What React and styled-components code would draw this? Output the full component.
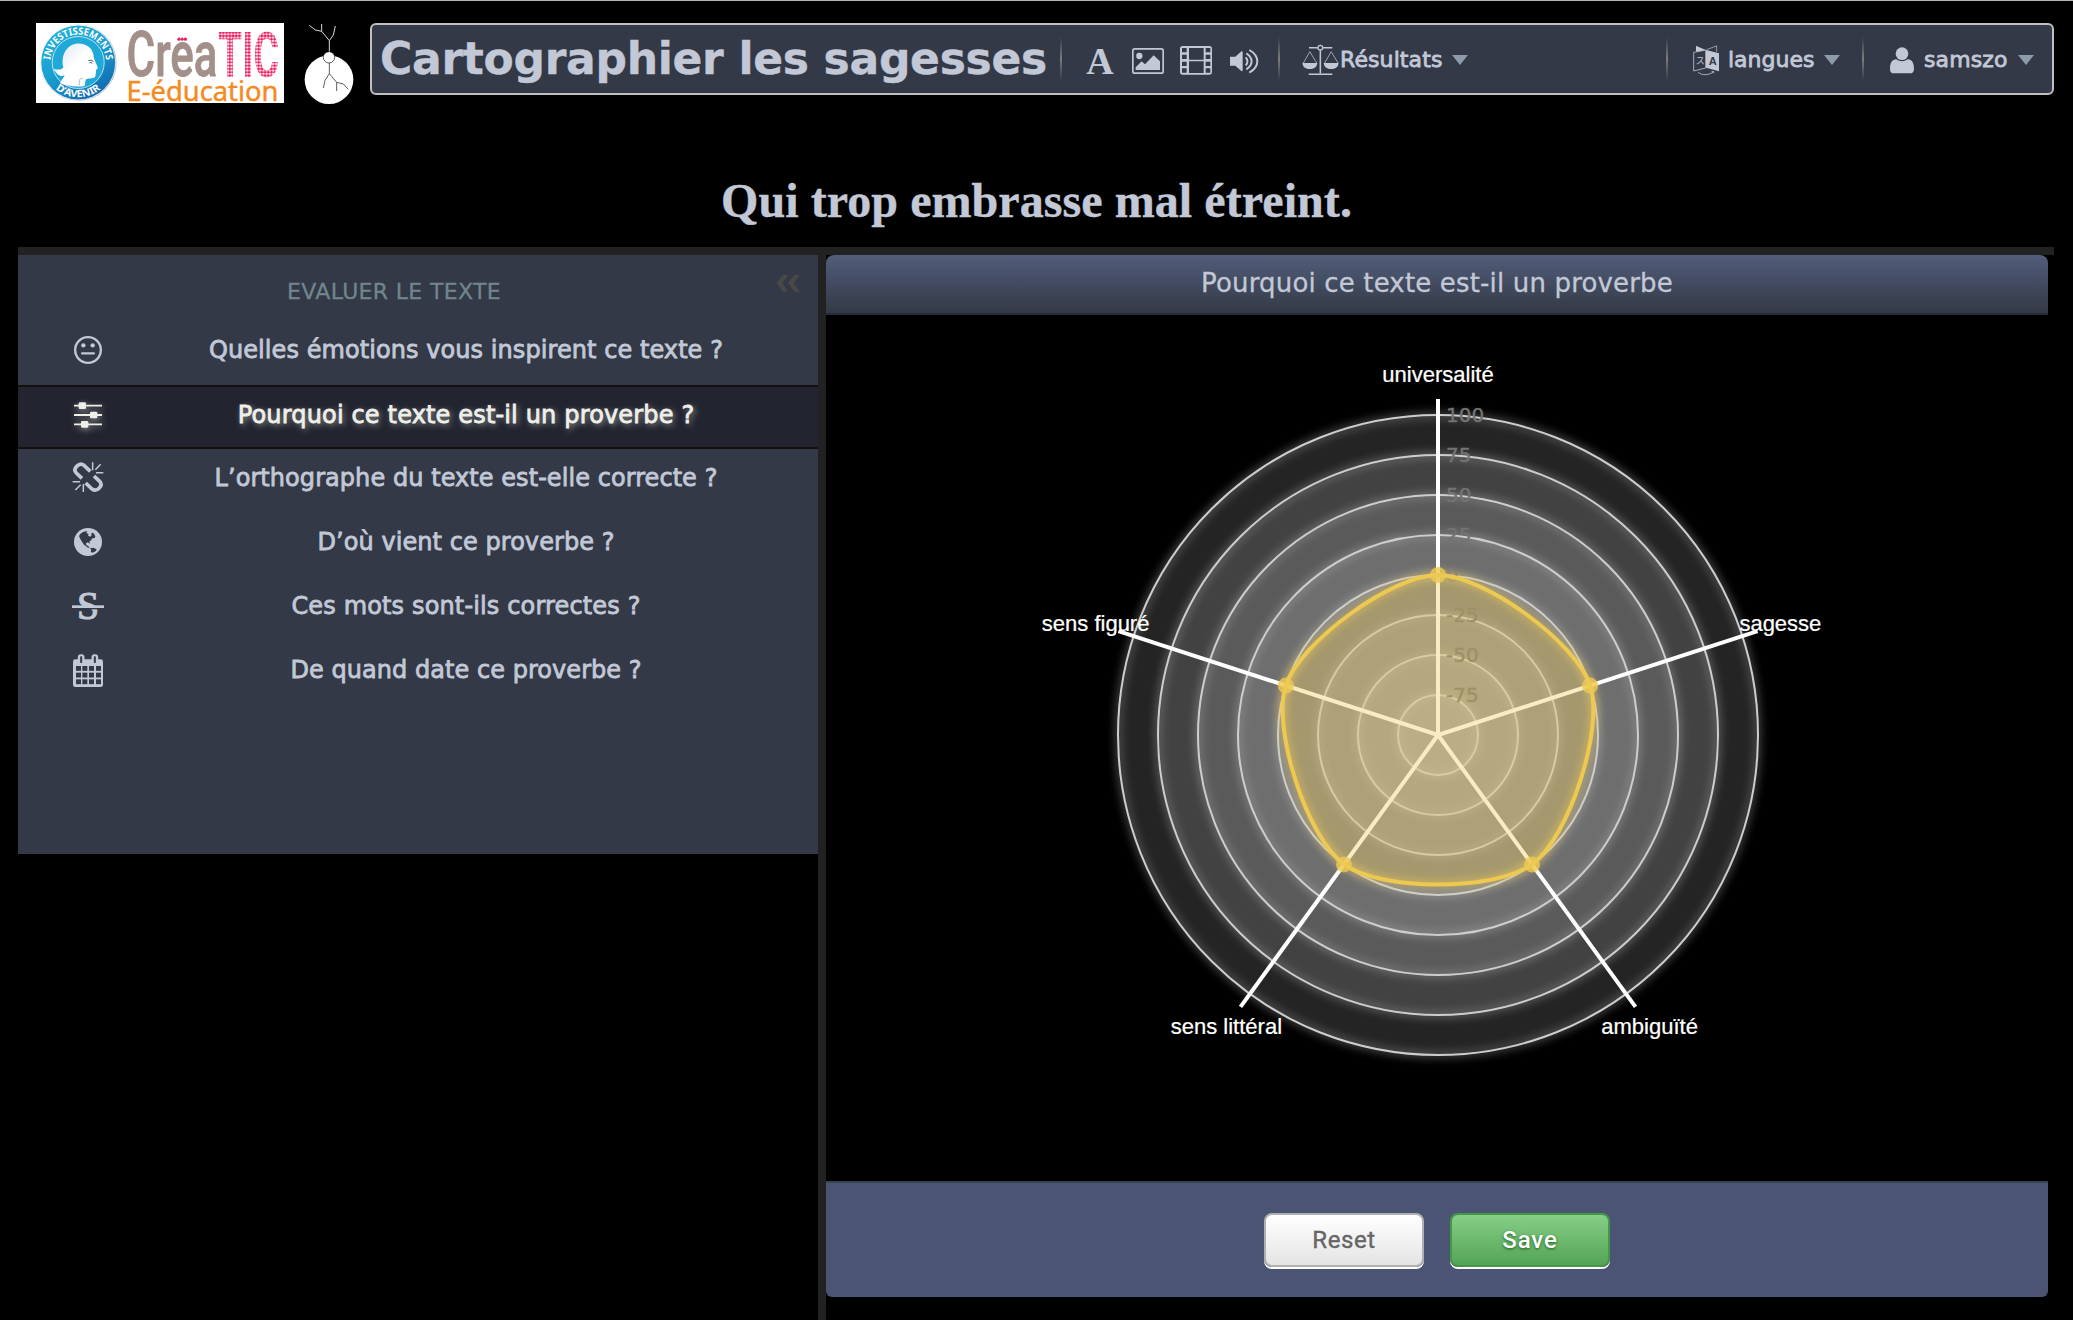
import React from 'react';
import styled, { createGlobalStyle, css } from 'styled-components';

const SANS = '"DejaVu Sans", Verdana, sans-serif';
const INK = '#c2c8d6';
const PANEL = '#333947';

const GlobalStyle = createGlobalStyle`
  * { box-sizing: border-box; }
  html, body { margin: 0; padding: 0; background: #000; }
  body { font-family: ${SANS}; color: ${INK}; overflow: hidden; }
  svg { display: block; flex: none; overflow: visible; }
`;

const Page = styled.div`
  width: 100vw;
  height: 100vh;
  display: flex;
  flex-direction: column;
  background: #000;
  border-top: 1px solid #b1b7b5;
`;

const Header = styled.header`
  display: flex;
  align-items: flex-start;
  padding: 22px 19px 0 36px;
  height: 102px;
`;

const LogoBox = styled.div`
  width: 248px;
  height: 80px;
  background: #fff;
  margin-right: 20px;
`;

const TreeBox = styled.div`
  width: 50px;
  height: 80px;
  margin-right: 16px;
`;

const Toolbar = styled.nav`
  flex: 1;
  height: 72px;
  display: flex;
  align-items: center;
  background: ${PANEL};
  border: 2px solid #c0c0c0;
  border-radius: 6px;
  padding: 0 18px 0 8px;
`;

const AppName = styled.h1`
  margin: 0;
  width: 680px;
  font-size: 44px;
  line-height: 68px;
  height: 68px;
  font-weight: 700;
  letter-spacing: -0.3px;
  white-space: nowrap;
  -webkit-text-stroke: 0.4px ${INK};
`;

const Separator = styled.i`
  width: 2px;
  height: 44px;
  background: linear-gradient(to bottom, rgba(128, 128, 128, 0), #7d7b7b 50%, rgba(128, 128, 128, 0));
`;

const MediaGroup = styled.div`
  display: flex;
  padding: 3px 10px 0 14px;
`;

const MediaButton = styled.span`
  width: 48px;
  height: 44px;
  display: flex;
  align-items: center;
  justify-content: center;
`;

const MenuButton = styled.div`
  display: flex;
  align-items: center;
  padding-top: 2px;
  padding-left: ${(p) => p.$left}px;
  padding-right: ${(p) => p.$right || 0}px;
`;

const MenuLabel = styled.span`
  width: ${(p) => p.$width}px;
  margin-left: ${(p) => p.$gap}px;
  font-size: 22px;
  line-height: 30px;
  letter-spacing: ${(p) => p.$track || 0}px;
  white-space: nowrap;
  -webkit-text-stroke: 0.8px ${INK};
`;

const Caret = styled.i`
  border: 8px solid transparent;
  border-top: 10px solid #8d9aa9;
  border-bottom: 0;
`;

const Spacer = styled.div`
  flex: 1;
`;

const Proverb = styled.h2`
  margin: 0;
  height: 144px;
  padding-top: 70px;
  text-align: center;
  font-family: "Liberation Serif", "Times New Roman", serif;
  font-size: 48px;
  line-height: 56px;
  font-weight: 700;
  letter-spacing: 0.07px;
  -webkit-text-stroke: 0.4px ${INK};
`;

const Workspace = styled.main`
  flex: 1;
  display: flex;
  margin: 0 19px 0 18px;
  border-top: 8px solid #222;
`;

const Side = styled.aside`
  width: 808px;
  border-right: 8px solid #222;
`;

const SidePanel = styled.div`
  height: 599px;
  background: ${PANEL};
`;

const SideHeader = styled.div`
  height: 66px;
  display: flex;
  align-items: flex-start;
`;

const SideTitle = styled.div`
  width: 752px;
  padding-top: 21px;
  text-align: center;
  font-size: 22px;
  line-height: 31px;
  letter-spacing: 0.33px;
  color: #71868c;
  -webkit-text-stroke: 0.3px #71868c;
`;

const Collapse = styled.div`
  padding: 19px 0 0 6px;
`;

const Entry = styled.div`
  height: 64px;
  display: flex;
  align-items: center;
  padding: 0 0 6px 44px;
  color: ${INK};
  ${(p) =>
    p.$active &&
    css`
      color: #efefea;
      background: #222530;
      border-top: 2px solid #111;
      border-bottom: 2px solid #111;
      padding-bottom: 5px;
      text-shadow: 2px 2px 6px rgba(240, 240, 225, 0.65);
      svg { filter: drop-shadow(1px 2px 3px rgba(240, 240, 225, 0.5)); }
    `}
`;

const EntryIcon = styled.span`
  width: 52px;
  display: flex;
  justify-content: center;
`;

const EntryText = styled.span`
  flex: 1;
  text-align: center;
  font-size: 24px;
  line-height: 32px;
  letter-spacing: ${(p) => p.$track || 0}px;
  -webkit-text-stroke: 0.8px currentColor;
`;

const Detail = styled.section`
  flex: 1;
  display: flex;
  flex-direction: column;
  margin-right: 6px;
  padding-bottom: 23px;
`;

const DetailHeader = styled.div`
  height: 60px;
  border-radius: 8px 8px 0 0;
  border-bottom: 2px solid #272c38;
  background: linear-gradient(#515d7a, #333945);
  text-align: center;
  font-size: 26px;
  line-height: 57px;
  letter-spacing: 0.16px;
  -webkit-text-stroke: 0.3px ${INK};
`;

const ChartArea = styled.div`
  flex: 1;
  min-height: 0;
`;

const Footer = styled.div`
  height: 116px;
  display: flex;
  justify-content: center;
  align-items: flex-start;
  gap: 26px;
  padding-top: 30px;
  background: #4b5573;
  border-top: 2px solid #3d4355;
  border-radius: 0 0 6px 6px;
`;

const Button = styled.button`
  width: 160px;
  height: 54px;
  padding: 0 0 1px;
  border-radius: 8px;
  font-family: Roboto, sans-serif;
  font-size: 24px;
  letter-spacing: ${(p) => (p.$primary ? 0.9 : 0.6)}px;
  border: 2px solid ${(p) => (p.$primary ? '#46964a' : '#b0b0b0')};
  color: ${(p) => (p.$primary ? '#fff' : '#666')};
  font-weight: ${(p) => (p.$primary ? 500 : 400)};
  -webkit-text-stroke: ${(p) => (p.$primary ? '0' : '0.4px #666')};
  text-shadow: ${(p) => (p.$primary ? '0 1px 3px rgba(0,60,0,.75)' : 'none')};
  background: ${(p) => (p.$primary ? 'linear-gradient(#85cf86, #54a457)' : 'linear-gradient(#fff, #e4e4e4)')};
  box-shadow: 0 2px 0 #fff;
`;

/* ---------- logos ---------- */

function CreaticLogo() {
  return (
    <svg width="248" height="80" viewBox="36 23 248 80">
      <defs>
        <linearGradient id="badge" x1="0" y1="0" x2="0.6" y2="1">
          <stop offset="0" stopColor="#22b4de" />
          <stop offset="0.55" stopColor="#1b9fd2" />
          <stop offset="1" stopColor="#136eb4" />
        </linearGradient>
        <linearGradient id="face" x1="0" y1="0" x2="1" y2="1">
          <stop offset="0" stopColor="#d9e4ee" />
          <stop offset="0.5" stopColor="#fff" />
        </linearGradient>
        <pattern id="dots" x="218.6" y="31" width="3.2" height="3.3" patternUnits="userSpaceOnUse">
          <circle cx="1.6" cy="1.65" r="1.5" fill="#ea1c5c" />
        </pattern>
        <path id="arcTop" d="M50.2,62.5 A28,28 0 0 1 106.2,62.5" />
        <path id="arcBottom" d="M43.4,62.5 A34.8,34.8 0 0 0 113,62.5" />
      </defs>
      <circle cx="78.6" cy="62.8" r="38.2" fill="#cdd3d8" />
      <circle cx="78" cy="62.3" r="37.6" fill="#fff" />
      <circle cx="78.2" cy="62.5" r="37" fill="url(#badge)" />
      <circle cx="78.2" cy="62.5" r="26" fill="#1fa9d8" stroke="#dff2fa" strokeWidth="0.8" />
      <g transform="translate(0 0) scale(0.33333)">
        <path
          d="M180,250 C186,238 192,232 194,226 C182,232 170,224 161,206 C172,210 182,210 190,203 C183,176 192,148 214,136 C238,124 266,134 276,152 C282,162 280,170 283,178 L293,202 C294,208 288,208 288,211 L288,218 C286,221 288,225 285,231 C278,238 262,232 257,240 L254,258 C228,262 198,258 180,250 Z"
          fill="url(#face)"
        />
        <path d="M265,182 Q273,178 280,184 M268,189 Q273,185 277,190" stroke="#53606c" strokeWidth="3" fill="none" />
        <path d="M248,236 C240,232 236,240 238,256" stroke="#a9b8c6" strokeWidth="3" fill="none" />
      </g>
      <text fontFamily="Noto Sans, sans-serif" fontWeight="700" fontSize="10" fill="#fff">
        <textPath href="#arcTop" startOffset="2.5" textLength="83" lengthAdjust="spacingAndGlyphs">INVESTISSEMENTS</textPath>
      </text>
      <text fontFamily="Noto Sans, sans-serif" fontWeight="700" fontSize="10" fill="#fff">
        <textPath href="#arcBottom" startOffset="30" textLength="49" lengthAdjust="spacingAndGlyphs">D’AVENIR</textPath>
      </text>
      <text x="126.5" y="76" fontFamily="Roboto, sans-serif" fontWeight="500" fontSize="63" fill="#a3908a" stroke="#a3908a" strokeWidth="0.8" textLength="91" lengthAdjust="spacingAndGlyphs">Crea</text>
      <circle cx="179" cy="39.2" r="1.6" fill="#ea1c5c" />
      <circle cx="182.2" cy="39.2" r="1.6" fill="#ea1c5c" />
      <circle cx="185.4" cy="39.2" r="1.6" fill="#ea1c5c" />
      <text x="218" y="76.5" fontFamily="Roboto, sans-serif" fontWeight="700" fontSize="63" fill="url(#dots)" textLength="61" lengthAdjust="spacingAndGlyphs">TIC</text>
      <text x="126.5" y="100.5" fontFamily="Comic Sans MS, Noto Sans, sans-serif" fontSize="27" fill="#f58a1f" stroke="#f58a1f" strokeWidth="0.4" textLength="152" lengthAdjust="spacingAndGlyphs">E-éducation</text>
    </svg>
  );
}

function TreeLogo() {
  return (
    <svg width="50" height="80" viewBox="912 69 150 240" fill="none">
      <circle cx="987" cy="239" r="73" fill="#fff" />
      <g stroke="#d8d8d8" strokeWidth="3">
        <path d="M988,156 V122 L965,94 L946,90 L928,76 M965,94 V72 M988,122 L1000,105 L1006,78" />
      </g>
      <g stroke="#333" strokeWidth="2.4">
        <path d="M988,188 V221 L975,241 L970,264 M988,221 L1010,247 L1030,252 L1045,268 M1010,247 V273" />
      </g>
      <circle cx="987" cy="172" r="17" fill="#fff" stroke="#111" strokeWidth="2" />
    </svg>
  );
}

/* ---------- toolbar icons ---------- */

const LetterIcon = () => (
  <svg width="32" height="32" viewBox="0 0 32 32">
    <text x="16" y="28.5" textAnchor="middle" fontFamily="Liberation Serif, serif" fontWeight="700" fontSize="38" fill={INK}>A</text>
  </svg>
);

const ImageIcon = () => (
  <svg width="32" height="26" viewBox="276 141 96 78">
    <rect x="278.5" y="143.5" width="91" height="73" rx="6" fill="none" stroke={INK} strokeWidth="5" />
    <circle cx="298" cy="165" r="9.5" fill={INK} />
    <path d="M287,207 V199 L305,181 L315,190 L341,163 L360,181 V207 Z" fill={INK} />
  </svg>
);

const FilmIcon = () => {
  const hole = (x, y, w, h) => `M${x},${y} h${w} v${h} h${-w} Z `;
  const ys = [147, 167, 188, 208];
  const holes =
    hole(447, 147, 44, 35) + hole(447, 187, 44, 35) +
    ys.map((y) => hole(426, y, 14, 13) + hole(497, y, 14, 13)).join('');
  return (
    <svg width="32" height="29" viewBox="420 141 96 87">
      <path
        fill={INK}
        fillRule="evenodd"
        d={`M428,141 H508 Q516,141 516,149 V219 Q516,227 508,227 H428 Q420,227 420,219 V149 Q420,141 428,141 Z ${holes}`}
      />
    </svg>
  );
};

const VolumeIcon = () => (
  <svg width="32" height="26" viewBox="564 141 96 78">
    <path d="M570,167 H586 L604,151 Q608,149 608,154 V207 Q608,212 604,210 L586,194 H570 Z" fill={INK} />
    <path d="M617,169 Q628,181 617,193 M619,157 C640,170 640,192 619,205 M628,147 C660,165 660,197 628,215" fill="none" stroke={INK} strokeWidth="6" />
  </svg>
);

const BalanceIcon = () => (
  <svg width="37" height="32" viewBox="785 134 111 96">
    <g fill="none" stroke={INK} strokeWidth="4.5">
      <path d="M806,145 H832 M848,145 H876 M840,153 V222 M805,224.5 H876" />
      <circle cx="840" cy="145" r="7" strokeWidth="4" />
      <path d="M789,191 L808.500,157 L829,191 M853,191 L872.500,157 L893,191" strokeWidth="2.2" />
    </g>
    <path d="M786,191 H831 C829,205 820,209 808.500,209 S788,205 786,191 Z M850,191 H895 C893,205 884,209 872.500,209 S852,205 850,191 Z" fill={INK} />
  </svg>
);

const TranslateIcon = () => (
  <svg width="27" height="31" viewBox="279 135 81 93">
    <path d="M288,137 L317,150 L288,155 Z" fill={INK} />
    <path d="M320,149 L350,137.500 V156" fill="none" stroke={INK} strokeWidth="2" />
    <path d="M281,157 L317,150.500 V204 L281,213 Z" fill="none" stroke={INK} strokeWidth="2.4" />
    <path d="M318,150 L357,160 V214 L318,203 Z" fill={INK} />
    <path d="M294,217 C306,227 328,226 341,215 M335,215 L341,214.500 L341,220" fill="none" stroke={INK} strokeWidth="2.4" />
    <text x="287" y="193" fontFamily="Noto Sans CJK JP, sans-serif" fontSize="27" fill={INK}>ス</text>
    <text x="326" y="196" fontFamily="Liberation Sans, sans-serif" fontWeight="700" fontSize="35" textLength="24" lengthAdjust="spacingAndGlyphs" fill={PANEL}>A</text>
  </svg>
);

const UserIcon = () => (
  <svg width="24" height="27" viewBox="870 140 72 81">
    <circle cx="906" cy="160" r="19" fill={INK} />
    <path d="M870,205 C870,188 876,177 889,177 C899,185 913,185 923,177 C936,177 942,188 942,205 C942,215 938,219 930,219 H882 C874,219 870,215 870,205 Z" fill={INK} />
  </svg>
);

/* ---------- side menu icons ---------- */

const MehIcon = () => (
  <svg width="30" height="30" viewBox="219 314 90 90" fill="currentColor">
    <circle cx="264" cy="359" r="38.500" fill="none" stroke="currentColor" strokeWidth="7" />
    <circle cx="250" cy="345" r="6.500" />
    <circle cx="278" cy="345" r="6.500" />
    <rect x="243" y="366" width="42" height="6.500" rx="3" />
  </svg>
);

const SlidersIcon = () => (
  <svg width="30" height="30" viewBox="219 509 90 90" fill="currentColor">
    <path d="M222,526 H306 M222,554 H306 M222,582 H306" stroke="currentColor" strokeWidth="5.500" />
    <rect x="236" y="516" width="22" height="20" rx="4" />
    <rect x="270" y="544" width="22" height="20" rx="4" />
    <rect x="243" y="572" width="22" height="20" rx="4" />
  </svg>
);

const UnlinkHalf = () => (
  <>
    <path d="M246,113 L229,97 Q220,87 230,77 Q241,66 252,74 L271,92" fill="none" stroke="currentColor" strokeWidth="11" />
    <path d="M278,65 V89 M302,71 L286,87 M310,96 H288" fill="none" stroke="currentColor" strokeWidth="4.500" />
  </>
);

const UnlinkIcon = () => (
  <svg width="32" height="35" viewBox="216 61 96 105">
    <UnlinkHalf />
    <g transform="rotate(180 264 109.500)">
      <UnlinkHalf />
    </g>
  </svg>
);

const GlobeIcon = () => (
  <svg width="30" height="30" viewBox="219 260 90 90">
    <circle cx="264" cy="305" r="42" fill="currentColor" />
    <path
      fill={PANEL}
      d="M237,287 C241,279 250,273 262,273 L259,278 L266,281 L264,286 L271,289 L275,284 L274,277 L281,279 L286,288 L284,294 L278,293 L273,300 L268,304 L270,310 L263,306 L258,309 L259,315 L265,317 L269,324 L262,321 L252,313 L245,303 L241,296 Z"
    />
    <path fill={PANEL} d="M270,324 L280,322 L290,327 L287,333 L277,337 L272,334 L274,329 Z" />
  </svg>
);

const StrikeIcon = () => (
  <svg width="32" height="30" viewBox="216 452 96 90">
    <text x="264" y="537" textAnchor="middle" fontFamily="Liberation Serif, serif" fontSize="119" fill="currentColor" stroke="currentColor" strokeWidth="3.500">S</text>
    <rect x="216" y="500" width="96" height="7" fill={PANEL} />
    <rect x="216" y="495" width="96" height="8" fill="currentColor" />
  </svg>
);

const CalendarIcon = () => {
  const xs = [228, 247, 267, 288];
  const ys = [675, 695, 715];
  return (
    <svg width="30" height="33" viewBox="219 639 90 99">
      <rect x="219" y="655" width="90" height="83" rx="7" fill="currentColor" />
      {ys.map((y) => xs.map((x) => <rect key={`${x}-${y}`} x={x} y={y} width="15" height="14.500" fill={PANEL} />))}
      {[243.5, 284.5].map((x) => (
        <g key={x}>
          <rect x={x - 10} y="640" width="20" height="30" rx="9" fill="currentColor" />
          <rect x={x - 3} y="646" width="6" height="20" rx="2" fill={PANEL} />
        </g>
      ))}
    </svg>
  );
};

const CollapseIcon = () => (
  <svg width="24" height="19" viewBox="1127 373 72 57">
    <path d="M1163,375 L1148,375 L1129,400 L1148,426 L1163,426 L1146,400 Z M1198,375 L1183,375 L1163,400 L1183,426 L1198,426 L1180,400 Z" fill="#494948" />
  </svg>
);

/* ---------- radar chart ---------- */

const AXES = ['universalité', 'sagesse', 'ambiguïté', 'sens littéral', 'sens figuré'];
const VALUES = [0, 0, 0, 0, 0];
const LEVELS = [100, 75, 50, 25, 0, -25, -50, -75];
const RADIUS = 160;
const scale = (v) => ((v + 100) / 200) * RADIUS;
const point = (i, v) => {
  const a = (i * 2 * Math.PI) / AXES.length - Math.PI / 2;
  return [scale(v) * Math.cos(a), scale(v) * Math.sin(a)];
};

function smoothClosedPath(pts) {
  const n = pts.length;
  const k = 0.15;
  const tangent = (i) => {
    const a = pts[(i - 1 + n) % n];
    const b = pts[(i + 1) % n];
    return [k * (b[0] - a[0]), k * (b[1] - a[1])];
  };
  let d = `M${pts[0]}`;
  for (let i = 0; i < n; i += 1) {
    const j = (i + 1) % n;
    const t0 = tangent(i);
    const t1 = tangent(j);
    d += `C${pts[i][0] + t0[0]},${pts[i][1] + t0[1]} ${pts[j][0] - t1[0]},${pts[j][1] - t1[1]} ${pts[j]}`;
  }
  return `${d}Z`;
}

function Radar() {
  const pts = VALUES.map((v, i) => point(i, v));
  const blob = smoothClosedPath(pts);
  return (
    <svg width="1222" height="866" viewBox="0 0 611 433">
      <defs>
        <filter id="glow">
          <feGaussianBlur stdDeviation="2.5" result="blur" />
          <feMerge>
            <feMergeNode in="blur" />
            <feMergeNode in="SourceGraphic" />
          </feMerge>
        </filter>
      </defs>
      <g transform="translate(306 210)">
        {LEVELS.map((v) => (
          <circle key={v} r={scale(v)} fill="#cdcdcd" stroke="#cdcdcd" fillOpacity="0.096" filter="url(#glow)" />
        ))}
        {LEVELS.map((v) => (
          <text key={v} x="4" y={-scale(v)} dy="0.37em" fontFamily="DejaVu Sans, sans-serif" fontSize="10" fill="#737373" stroke="#737373" strokeWidth="0.2">{v}</text>
        ))}
        {AXES.map((name, i) => {
          const [x, y] = point(i, 110);
          const [lx, ly] = point(i, 125);
          return (
            <g key={name}>
              <line x2={x} y2={y} stroke="#fff" strokeWidth="2" />
              <text x={lx} y={ly} dy="0.33em" textAnchor="middle" fontFamily="Liberation Sans, Helvetica, sans-serif" fontSize="11" fill="#fff" stroke="#fff" strokeWidth="0.12">{name}</text>
            </g>
          );
        })}
        <path d={blob} fill="#edc951" fillOpacity="0.35" />
        <path d={blob} fill="none" stroke="#edc951" strokeWidth="2" filter="url(#glow)" />
        {pts.map(([x, y], i) => (
          <circle key={AXES[i]} cx={x} cy={y} r="4" fill="#edc951" fillOpacity="0.8" />
        ))}
      </g>
    </svg>
  );
}

const ENTRIES = [
  { icon: MehIcon, text: 'Quelles émotions vous inspirent ce texte ?', track: 0.07 },
  { icon: SlidersIcon, text: 'Pourquoi ce texte est-il un proverbe ?', active: true, track: 0.16 },
  { icon: UnlinkIcon, text: 'L’orthographe du texte est-elle correcte ?', track: 0.06 },
  { icon: GlobeIcon, text: 'D’où vient ce proverbe ?', track: 0.06 },
  { icon: StrikeIcon, text: 'Ces mots sont-ils correctes ?', track: 0.15 },
  { icon: CalendarIcon, text: 'De quand date ce proverbe ?', track: 0.05 },
];

export default function App() {
  return (
    <Page>
      <GlobalStyle />
      <Header>
        <LogoBox><CreaticLogo /></LogoBox>
        <TreeBox><TreeLogo /></TreeBox>
        <Toolbar>
          <AppName>Cartographier les sagesses</AppName>
          <Separator />
          <MediaGroup>
            <MediaButton><LetterIcon /></MediaButton>
            <MediaButton><ImageIcon /></MediaButton>
            <MediaButton><FilmIcon /></MediaButton>
            <MediaButton><VolumeIcon /></MediaButton>
          </MediaGroup>
          <Separator />
          <MenuButton $left={22}>
            <BalanceIcon />
            <MenuLabel $width={112} $gap={1} $track={0.1}>Résultats</MenuLabel>
            <Caret />
          </MenuButton>
          <Spacer />
          <Separator />
          <MenuButton $left={25} $right={22}>
            <TranslateIcon />
            <MenuLabel $width={96} $gap={8}>langues</MenuLabel>
            <Caret />
          </MenuButton>
          <Separator />
          <MenuButton $left={26}>
            <UserIcon />
            <MenuLabel $width={94} $gap={10} $track={0.1}>samszo</MenuLabel>
            <Caret />
          </MenuButton>
        </Toolbar>
      </Header>
      <Proverb>Qui trop embrasse mal étreint.</Proverb>
      <Workspace>
        <Side>
          <SidePanel>
            <SideHeader>
              <SideTitle>EVALUER LE TEXTE</SideTitle>
              <Collapse><CollapseIcon /></Collapse>
            </SideHeader>
            {ENTRIES.map(({ icon: Icon, text, active, track }) => (
              <Entry key={text} $active={active}>
                <EntryIcon><Icon /></EntryIcon>
                <EntryText $track={track}>{text}</EntryText>
              </Entry>
            ))}
          </SidePanel>
        </Side>
        <Detail>
          <DetailHeader>Pourquoi ce texte est-il un proverbe</DetailHeader>
          <ChartArea><Radar /></ChartArea>
          <Footer>
            <Button>Reset</Button>
            <Button $primary>Save</Button>
          </Footer>
        </Detail>
      </Workspace>
    </Page>
  );
}
